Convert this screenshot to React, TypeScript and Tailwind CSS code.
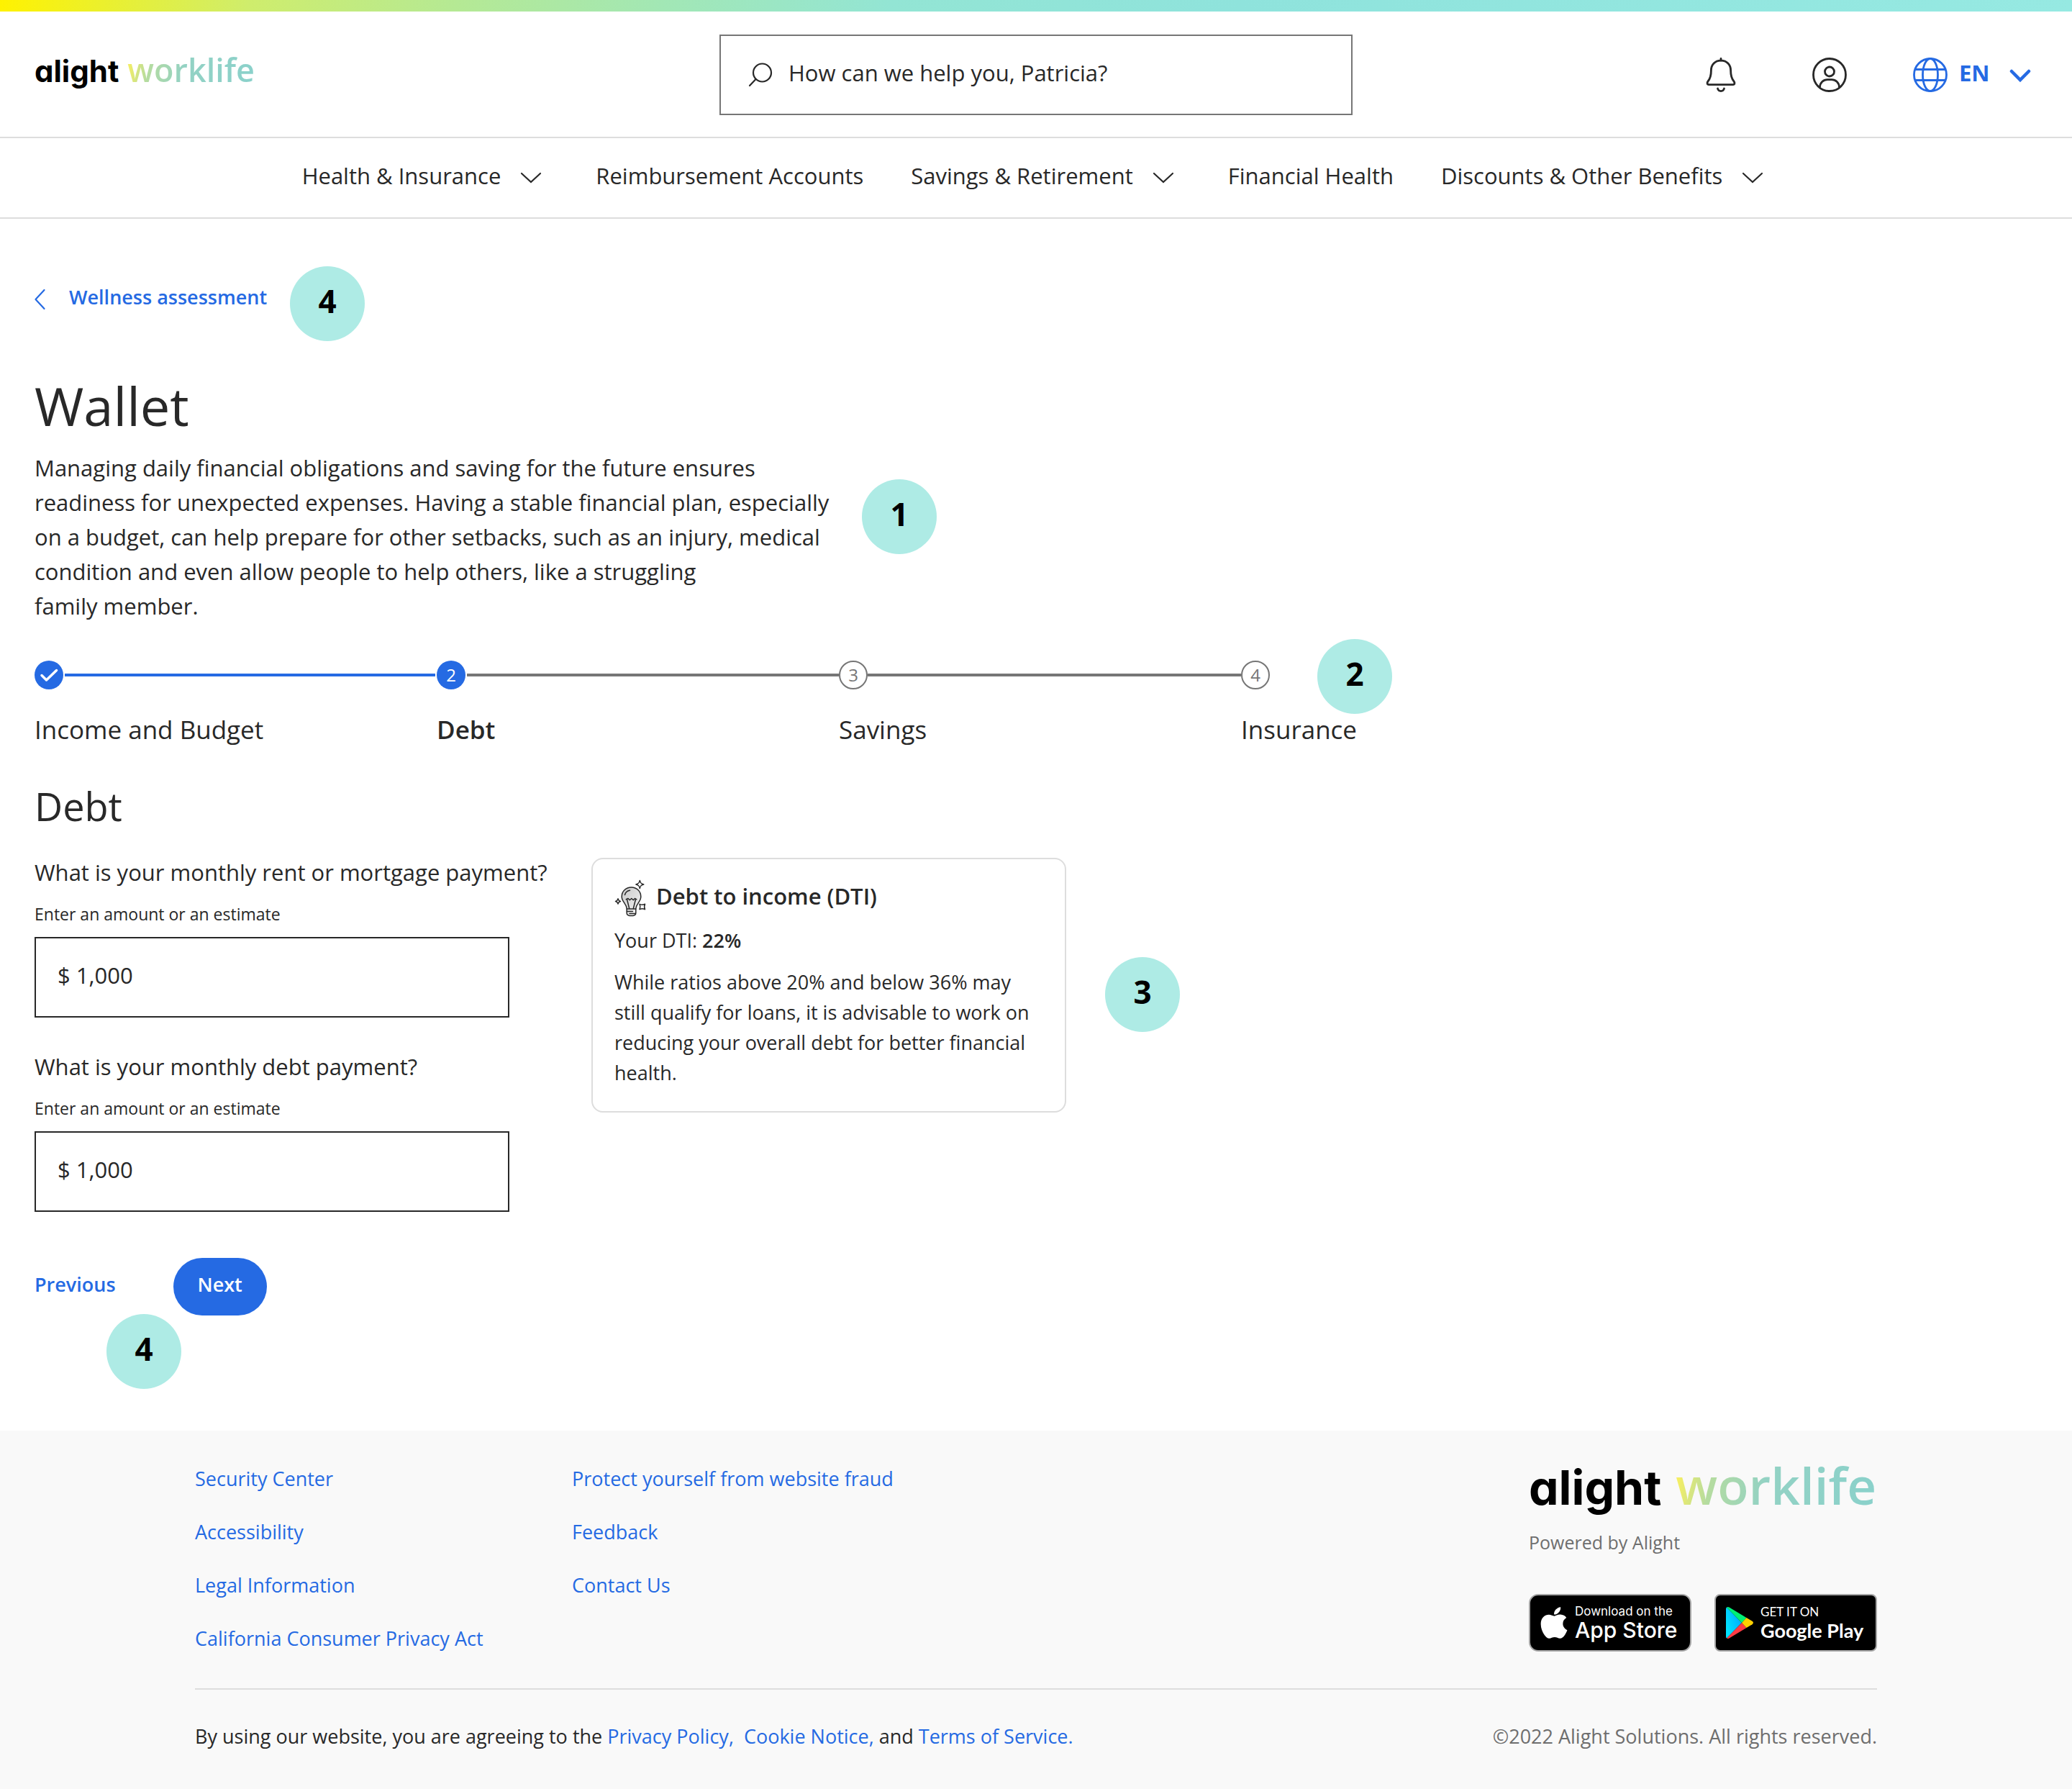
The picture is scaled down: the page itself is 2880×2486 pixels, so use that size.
import React from "react";
import { FaApple } from "react-icons/fa";

function Badge({ n, className = "" }: { n: number; className?: string }) {
  return (
    <div
      className={`flex size-26 shrink-0 items-center justify-center rounded-full bg-[#aeebe5] pb-2 text-[44px] leading-none font-bold text-black ${className}`}
    >
      {n}
    </div>
  );
}

function Wordmark({ large = false }: { large?: boolean }) {
  return (
    <div
      className={
        large
          ? "flex items-baseline gap-5 text-[71px] leading-[60px]"
          : "flex items-baseline gap-3 text-[45px] leading-[56px]"
      }
      aria-label="alight worklife"
    >
      <span
        className={
          large
            ? "font-['Inter'] text-[66px] font-bold text-black [font-feature-settings:'cv11']"
            : "font-['Inter'] text-[42px] font-bold text-black [font-feature-settings:'cv11']"
        }
      >
        alight
      </span>
      <span className="bg-[linear-gradient(100deg,#fff15a_0%,#b5dca0_18%,#93d2c4_45%,#8ad1cb_100%)] bg-clip-text font-semibold text-transparent">
        worklife
      </span>
    </div>
  );
}

function ChevronDown({ bold = false }: { bold?: boolean }) {
  return (
    <svg viewBox="0 0 48 48" className="size-12" fill="none" stroke="currentColor" strokeWidth={bold ? 4.5 : 2.2} aria-hidden>
      {bold ? <path d="M12 19l12 12 12-12" strokeLinecap="round" /> : <path d="M11 18l13 12 13-12" strokeLinecap="round" />}
    </svg>
  );
}

function BellIcon() {
  return (
    <svg viewBox="0 0 48 48" className="size-12" fill="none" stroke="#282828" strokeWidth="2.800" strokeLinecap="round" strokeLinejoin="round" aria-hidden>
      <path d="M24 1.500V4" />
      <path d="M24 4.200c-8.200 0-13.600 5.800-13.600 13.600 0 8.200-1.400 11.800-4.400 15.200-1.600 1.900-1.300 4.600 1.200 4.600h33.600c2.500 0 2.800-2.700 1.200-4.600-3-3.400-4.400-7-4.400-15.200 0-7.800-5.400-13.600-13.600-13.600z" />
      <path d="M19.500 43c.6 2.400 2.200 3.600 4.500 3.600s3.900-1.200 4.500-3.600" />
    </svg>
  );
}

function UserIcon() {
  return (
    <svg viewBox="0 0 48 48" className="size-12" fill="none" stroke="#282828" strokeWidth="2.800" aria-hidden>
      <circle cx="24" cy="24" r="22.500" />
      <circle cx="24" cy="19.500" r="6.500" />
      <path d="M10.500 41.500c0-6.700 5.200-10.800 10.500-10.800h6c5.300 0 10.500 4.100 10.500 10.800" />
    </svg>
  );
}

function GlobeIcon() {
  return (
    <svg viewBox="0 0 48 48" className="size-12" fill="none" stroke="#256ae3" strokeWidth="2.800" aria-hidden>
      <circle cx="24" cy="24" r="22.500" />
      <ellipse cx="24" cy="24" rx="10.500" ry="22.500" />
      <path d="M3 16.500h42M3 31.500h42" />
    </svg>
  );
}

function BulbIcon() {
  return (
    <svg viewBox="13 12 44 52" className="h-13 w-11 shrink-0" fill="none" stroke="#282828" strokeWidth="1.500" strokeLinecap="round" strokeLinejoin="round" aria-hidden>
      <defs>
        <linearGradient id="bulb-glass" x1="0" y1="0" x2="1" y2="1">
          <stop offset="0" stopColor="#c9c9c9" />
          <stop offset="0.600" stopColor="#e3e3e3" />
          <stop offset="1" stopColor="#ffffff" />
        </linearGradient>
      </defs>
      <path
        d="M36.500 23c-7.600 0-13.300 5.700-13.300 12.900 0 7.100 6.300 9.300 7 16.600v6.200c0 2.300 2.300 3.900 6.300 3.900s6.300-1.600 6.300-3.900v-6.200c.7-7.300 7-9.500 7-16.600C49.800 28.700 44.100 23 36.500 23z"
        fill="url(#bulb-glass)"
      />
      <path d="M27.500 33.500c.8-3.200 3.400-5.600 7-6.200" />
      <path d="M29.300 39.800l2.700-1.300 2.300 2.200 2.500-2.200 2.500 2.200 2.200-2.200 2.300 1.300" />
      <path d="M30.700 40.500l3 12M42.300 40.500l-3 12" />
      <path d="M30.200 53h12.600M30.400 56.500h8M34 59.500h8" />
      <path d="M48.300 13.400c.7 3.700 1.800 4.800 5.400 5.600-3.600.8-4.700 1.900-5.400 5.600-.7-3.700-1.800-4.800-5.400-5.600 3.600-.8 4.700-1.900 5.400-5.600z" />
      <path d="M18 38.800c.5 2.400 1.100 3.100 3.500 3.600-2.400.5-3 1.100-3.500 3.600-.5-2.500-1.100-3.100-3.500-3.600 2.400-.5 3-1.200 3.500-3.600z" />
      <path d="M48 46.300c2.600 1.300 4.800 1.300 7.500 0-1.300 2.700-1.300 4.800 0 7.400-2.700-1.300-4.900-1.300-7.500 0 1.200-2.600 1.200-4.700 0-7.400z" />
    </svg>
  );
}

function PlayIcon() {
  return (
    <svg viewBox="0 0 38 46" className="h-[46px] w-[38px] shrink-0" aria-hidden>
      <defs>
        <linearGradient id="play-blue" x1="1" y1="0" x2="0" y2="0.600">
          <stop offset="0" stopColor="#00a0ff" />
          <stop offset="1" stopColor="#00e2ff" />
        </linearGradient>
      </defs>
      <path d="M1 1.500Q0 2 0 4v38q0 2 1 2.500L22 23z" fill="url(#play-blue)" />
      <path d="M1 1.500Q2.500.5 4.500 1.600L28.500 16 22 23z" fill="#00f076" />
      <path d="M1 44.500q1.500 1 3.500-.1L28.500 30 22 23z" fill="#ff3a44" />
      <path d="M28.500 16l8 4.800q3 2.200 0 4.400l-8 4.800L22 23z" fill="#ffcf00" />
    </svg>
  );
}

const navItems = [
  { label: "Health & Insurance", menu: true },
  { label: "Reimbursement Accounts", menu: false },
  { label: "Savings & Retirement", menu: true },
  { label: "Financial Health", menu: false },
  { label: "Discounts & Other Benefits", menu: true },
];

function Header() {
  return (
    <header>
      <div className="h-4 bg-[linear-gradient(100deg,#fff200_0%,#cfed6c_12%,#b5e994_22%,#a2e7b5_32%,#93e5d4_43%,#8fe3dc_60%,#96e9e2_100%)]" />
      <div className="grid grid-cols-[1fr_880px_1fr] items-center border-b-2 border-[#dddddd] px-12 pt-8 pb-[30px]">
        <a href="#home" className="pb-3">
          <Wordmark />
        </a>
        <label className="flex h-28 items-center gap-[22px] border-2 border-[#767676] px-[38px]">
          <svg viewBox="0 0 34 34" className="size-[34px] shrink-0" fill="none" stroke="#282828" strokeWidth="2.200" strokeLinecap="round" aria-hidden>
            <circle cx="19.500" cy="14" r="12.500" />
            <path d="M10.500 23L2 32" />
          </svg>
          <input
            type="search"
            aria-label="Search"
            placeholder="How can we help you, Patricia?"
            className="h-full min-w-0 flex-1 bg-transparent pb-1.5 outline-none placeholder:text-[#282828] placeholder:opacity-100"
          />
        </label>
        <div className="flex items-center justify-end">
          <button type="button" aria-label="Notifications" className="mr-[103px]">
            <BellIcon />
          </button>
          <button type="button" aria-label="Account" className="mr-[92px]">
            <UserIcon />
          </button>
          <label className="flex items-center font-bold text-[#256ae3]">
            <GlobeIcon />
            <select aria-label="Language" className="ml-4 appearance-none bg-transparent pb-1.5 leading-12">
              <option>EN</option>
            </select>
            <span className="ml-[18px]">
              <ChevronDown bold />
            </span>
          </label>
        </div>
      </div>
      <nav className="flex h-28 items-center justify-center gap-[66px] border-b-2 border-[#dddddd]">
        {navItems.map((item) =>
          item.menu ? (
            <button key={item.label} type="button" className="flex items-center gap-[18px]">
              <span className="pb-1.5">{item.label}</span>
              <ChevronDown />
            </button>
          ) : (
            <a key={item.label} href="#nav" className="pb-1.5">
              {item.label}
            </a>
          ),
        )}
      </nav>
    </header>
  );
}

function Stepper() {
  const label = "mt-8 text-[35px] leading-12 whitespace-nowrap";
  const circle = "flex size-10 shrink-0 items-center justify-center rounded-full text-[24px] leading-none";
  return (
    <ol className="mt-[52px] flex">
      <li className="w-[559px]">
        <div className="flex items-center gap-0.5">
          <span className={`${circle} bg-[#256ae3]`}>
            <svg viewBox="0 0 40 40" className="size-10" fill="none" stroke="#fff" strokeWidth="3.500" strokeLinecap="round" strokeLinejoin="round" aria-label="Completed">
              <path d="M10 20.500l6.500 6.500L30.500 13.500" />
            </svg>
          </span>
          <span className="mr-0.5 h-1 flex-1 bg-[#256ae3]" />
        </div>
        <p className={label}>Income and Budget</p>
      </li>
      <li className="w-[559px]" aria-current="step">
        <div className="flex items-center gap-0.5">
          <span className={`${circle} bg-[#256ae3] text-white`}>2</span>
          <span className="h-1 flex-1 bg-[#767676]" />
        </div>
        <p className={`${label} font-semibold`}>Debt</p>
      </li>
      <li className="w-[559px]">
        <div className="flex items-center">
          <span className={`${circle} border-2 border-[#767676] text-[#767676]`}>3</span>
          <span className="h-1 flex-1 bg-[#767676]" />
        </div>
        <p className={label}>Savings</p>
      </li>
      <li className="relative">
        <span className={`${circle} border-2 border-[#767676] text-[#767676]`}>4</span>
        <p className={label}>Insurance</p>
        <Badge n={2} className="absolute -top-[30px] left-[106px]" />
      </li>
    </ol>
  );
}

function AmountField({ id, label }: { id: string; label: string }) {
  return (
    <div>
      <label htmlFor={id} className="block whitespace-nowrap">
        {label}
      </label>
      <p id={`${id}-hint`} className="mt-[18px] text-[23px] leading-8">
        Enter an amount or an estimate
      </p>
      <input
        id={id}
        type="text"
        inputMode="numeric"
        defaultValue="$ 1,000"
        aria-describedby={`${id}-hint`}
        className="mt-4 h-28 w-full border-2 border-[#282828] px-[30px] pb-1.5 outline-none"
      />
    </div>
  );
}

function Main() {
  return (
    <main className="px-12 pt-[66px] pb-[58px]">
      <div className="flex items-center">
        <a href="#assessment" className="flex items-center pb-3 text-[27px] leading-12 font-semibold text-[#256ae3]">
          <svg viewBox="0 0 16 30" className="mr-8 h-[30px] w-4" fill="none" stroke="currentColor" strokeWidth="2.200" strokeLinecap="round" strokeLinejoin="round" aria-hidden>
            <path d="M13.500 2L1.500 15l12 13" />
          </svg>
          <span className="pb-1.5">Wellness assessment</span>
        </a>
        <Badge n={4} className="ml-8" />
      </div>

      <h1 className="mt-[46px] text-[74px] leading-[88px]">Wallet</h1>
      <div className="mt-[18px] flex items-start gap-6">
        <p className="w-[1126px]">
          Managing daily financial obligations and saving for the future ensures readiness for unexpected expenses.
          Having a stable financial plan, especially on a budget, can help prepare for other setbacks, such as an
          injury, medical condition and even allow people to help others, like a struggling family&nbsp;member.
        </p>
        <Badge n={1} className="mt-10" />
      </div>

      <Stepper />

      <h2 className="mt-[50px] text-[54px] leading-16">Debt</h2>
      <form onSubmit={(e) => e.preventDefault()}>
        <div className="mt-9 flex items-start">
          <div className="flex w-[660px] flex-col gap-11">
            <AmountField id="rent" label="What is your monthly rent or mortgage payment?" />
            <AmountField id="debt" label="What is your monthly debt payment?" />
          </div>
          <section className="mt-1 ml-[114px] w-[660px] rounded-2xl border-2 border-[#dddddd] px-[30px] pt-7 pb-8 text-[27px] leading-[42px]">
            <div className="flex items-center gap-3.5">
              <BulbIcon />
              <h3 className="pb-1.5 text-[31px] font-semibold">Debt to income (DTI)</h3>
            </div>
            <p className="mt-3">
              Your DTI: <strong className="font-semibold">22%</strong>
            </p>
            <p className="mt-4">
              While ratios above 20% and below 36% may still qualify for loans, it is advisable to work on reducing
              your overall debt for better financial health.
            </p>
          </section>
          <Badge n={3} className="mt-[142px] ml-[54px]" />
        </div>
        <div className="mt-16 flex items-center text-[27px] font-semibold">
          <button type="button" className="pb-1.5 text-[#256ae3]">
            Previous
          </button>
          <button type="submit" className="ml-20 h-20 rounded-full bg-[#256ae3] px-[34px] pb-1.5 text-white">
            Next
          </button>
        </div>
      </form>
      <Badge n={4} className="-mt-0.5 ml-[100px]" />
    </main>
  );
}

const footerLinks = [
  ["Security Center", "Accessibility", "Legal Information", "California Consumer Privacy Act"],
  ["Protect yourself from website fraud", "Feedback", "Contact Us"],
];

function Footer() {
  return (
    <footer className="bg-[#f9f9f9] px-[271px] pt-[46px] pb-[52px] text-[27px] leading-[42px]">
      <div className="flex justify-between border-b-2 border-[#dddddd] pb-12">
        <div className="flex">
          {footerLinks.map((column) => (
            <ul key={column[0]} className="flex w-[524px] flex-col gap-8">
              {column.map((text) => (
                <li key={text}>
                  <a href="#footer" className="text-[#256ae3]">
                    {text}
                  </a>
                </li>
              ))}
            </ul>
          ))}
        </div>
        <div className="w-[484px]">
          <Wordmark large />
          <p className="mt-[30px] text-[25px] leading-8 text-[#6e6e6e]">Powered by Alight</p>
          <div className="mt-14 flex justify-between">
            <a href="#ios" className="flex h-20 w-[226px] items-center rounded-[13px] border-2 border-[#a6a6a6] bg-black pl-3.5 font-['Inter'] text-white">
              <FaApple className="h-[50px] w-[38px]" />
              <span className="ml-2.5 flex flex-col">
                <span className="text-[17px] leading-5">Download on the</span>
                <span className="text-[30px] leading-8 font-medium">App Store</span>
              </span>
            </a>
            <a href="#android" className="flex h-20 w-[226px] items-center rounded-lg border-2 border-[#a6a6a6] bg-black pl-3.5 text-white">
              <PlayIcon />
              <span className="ml-2.5 flex flex-col pt-0.5 font-['Lato']">
                <span className="text-[17px] leading-5">GET IT ON</span>
                <span className="text-[27px] leading-8 font-bold">Google Play</span>
              </span>
            </a>
          </div>
        </div>
      </div>
      <div className="mt-11 flex justify-between">
        <p>
          By using our website, you are agreeing to the{" "}
          <a href="#privacy" className="text-[#256ae3]">Privacy Policy,</a>&nbsp;{" "}
          <a href="#cookies" className="text-[#256ae3]">Cookie Notice,</a> and{" "}
          <a href="#terms" className="text-[#256ae3]">Terms of Service.</a>
        </p>
        <p className="text-[#6e6e6e]">©2022 Alight Solutions. All rights reserved.</p>
      </div>
    </footer>
  );
}

export default function App() {
  return (
    <div className="min-h-screen bg-white font-['Open_Sans','Noto_Sans',sans-serif] text-[31px] leading-12 text-[#282828]">
      <Header />
      <Main />
      <Footer />
    </div>
  );
}
